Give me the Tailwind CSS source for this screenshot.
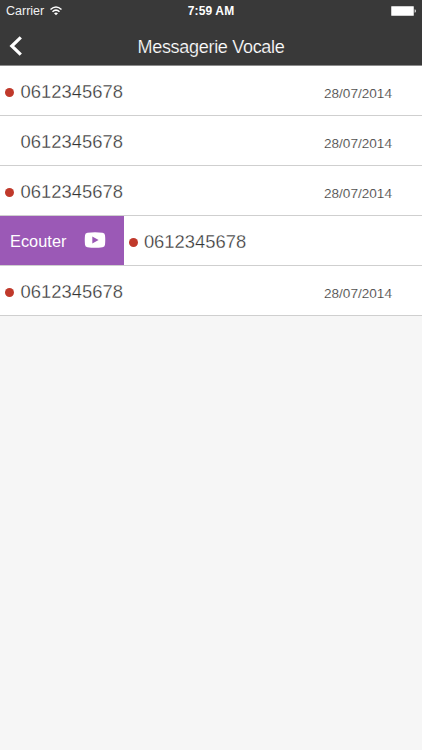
<!DOCTYPE html>
<html lang="fr">
<head>
  <meta charset="UTF-8" />
  <meta name="viewport" content="width=device-width, initial-scale=1" />
  <title>Messagerie Vocale</title>
  <script src="https://cdn.jsdelivr.net/npm/@tailwindcss/browser@4"></script>
</head>
<body class="min-h-screen bg-[#f6f6f6] font-['Liberation_Sans',Arial,sans-serif] text-[#333] overflow-hidden">
  <!-- Header -->
  <header class="h-[66px] bg-[#393939] border-b border-[#8c8c8c] text-white">
    <div class="h-[22px] grid grid-cols-3 items-center pl-[6px] pr-[6px] text-[12px]">
      <div class="flex items-center gap-[6px]">
        <span class="text-[12.5px] text-[#f2f2f2]">Carrier</span>
        <svg class="w-[12px] h-[10px]" viewBox="0 0 12 10" fill="none" stroke="#fff" stroke-width="1.5">
          <path d="M.5 3.5Q6-1.6 11.5 3.5M2.5 5.7Q6 2.5 9.5 5.7" />
          <path d="M4 7.2Q6 5.6 8 7.2L6 9.3Z" fill="#fff" stroke="none" />
        </svg>
      </div>
      <span class="text-center font-bold tracking-[.15px]">7:59 AM</span>
      <svg class="justify-self-end w-[25px] h-[10px]" viewBox="0 0 25 10" fill="#fff">
        <rect width="23" height="10" rx="1" fill="#c4c4c4" />
        <rect x=".8" y=".8" width="21.4" height="8.4" />
        <path d="M23.6 3.3q1.4 0 1.4 1.7t-1.4 1.7z" fill="#ddd" />
      </svg>
    </div>
    <div class="h-[43px] grid grid-cols-[40px_1fr_40px] items-center pt-[5px]">
      <svg class="ml-[9px] mb-[1px] w-[14px] h-[20px]" viewBox="0 0 14 20" fill="none" stroke="#fff" stroke-width="3.2">
        <path d="M11.8 1.3L2.8 10L11.8 18.7" />
      </svg>
      <h1 class="mt-[2px] text-center text-[18px] leading-6 tracking-[-.3px] [-webkit-text-stroke:.2px_#393939]">Messagerie Vocale</h1>
    </div>
  </header>

  <!-- Messages -->
  <ul>
    <li class="h-[50px] flex items-center bg-white border-b border-[#cfcfcf] pl-[5px] pr-[30px]">
      <span class="mt-[4px] size-[9px] rounded-full bg-[#c0392b]"></span>
      <span class="ml-[6.6px] mt-[2px] text-[18.4px] [-webkit-text-stroke:.3px_#fff]">0612345678</span>
      <span class="ml-auto mt-[7px] text-[13.6px] [-webkit-text-stroke:.2px_#fff]">28/07/2014</span>
    </li>
    <li class="h-[50px] flex items-center bg-white border-b border-[#cfcfcf] pl-[5px] pr-[30px]">
      <span class="size-[9px]"></span>
      <span class="ml-[6.6px] mt-[2px] text-[18.4px] [-webkit-text-stroke:.3px_#fff]">0612345678</span>
      <span class="ml-auto mt-[7px] text-[13.6px] [-webkit-text-stroke:.2px_#fff]">28/07/2014</span>
    </li>
    <li class="h-[50px] flex items-center bg-white border-b border-[#cfcfcf] pl-[5px] pr-[30px]">
      <span class="mt-[4px] size-[9px] rounded-full bg-[#c0392b]"></span>
      <span class="ml-[6.6px] mt-[2px] text-[18.4px] [-webkit-text-stroke:.3px_#fff]">0612345678</span>
      <span class="ml-auto mt-[7px] text-[13.6px] [-webkit-text-stroke:.2px_#fff]">28/07/2014</span>
    </li>
    <!-- Swiped row -->
    <li class="h-[50px] flex items-center bg-white border-b border-[#cfcfcf]">
      <button class="w-[123.5px] h-full flex items-center bg-[#9b59b6] text-white pl-[10px]">
        <span class="mt-[2px] w-[74px] text-left text-[16.3px] tracking-[.05px]">Ecouter</span>
        <svg class="mb-[2px] w-[22px] h-[16px]" viewBox="0 0 22 16">
          <path d="M3.5.7Q11-.3 18.5.7Q20.8 1 21 3.2Q21.5 8 21 12.8Q20.8 15 18.5 15.3Q11 16.3 3.5 15.3Q1.2 15 1 12.8Q.5 8 1 3.2Q1.2 1 3.5.7Z" fill="#fff" />
          <path d="M8.3 4.6L14.6 8L8.3 11.4Z" fill="#9b59b6" />
        </svg>
      </button>
      <span class="ml-[5px] mt-[4px] size-[9px] rounded-full bg-[#c0392b]"></span>
      <span class="ml-[6.4px] mt-[2px] text-[18.4px] [-webkit-text-stroke:.3px_#fff]">0612345678</span>
    </li>
    <li class="h-[50px] flex items-center bg-white border-b border-[#cfcfcf] pl-[5px] pr-[30px]">
      <span class="mt-[4px] size-[9px] rounded-full bg-[#c0392b]"></span>
      <span class="ml-[6.6px] mt-[2px] text-[18.4px] [-webkit-text-stroke:.3px_#fff]">0612345678</span>
      <span class="ml-auto mt-[7px] text-[13.6px] [-webkit-text-stroke:.2px_#fff]">28/07/2014</span>
    </li>
  </ul>
</body>
</html>
